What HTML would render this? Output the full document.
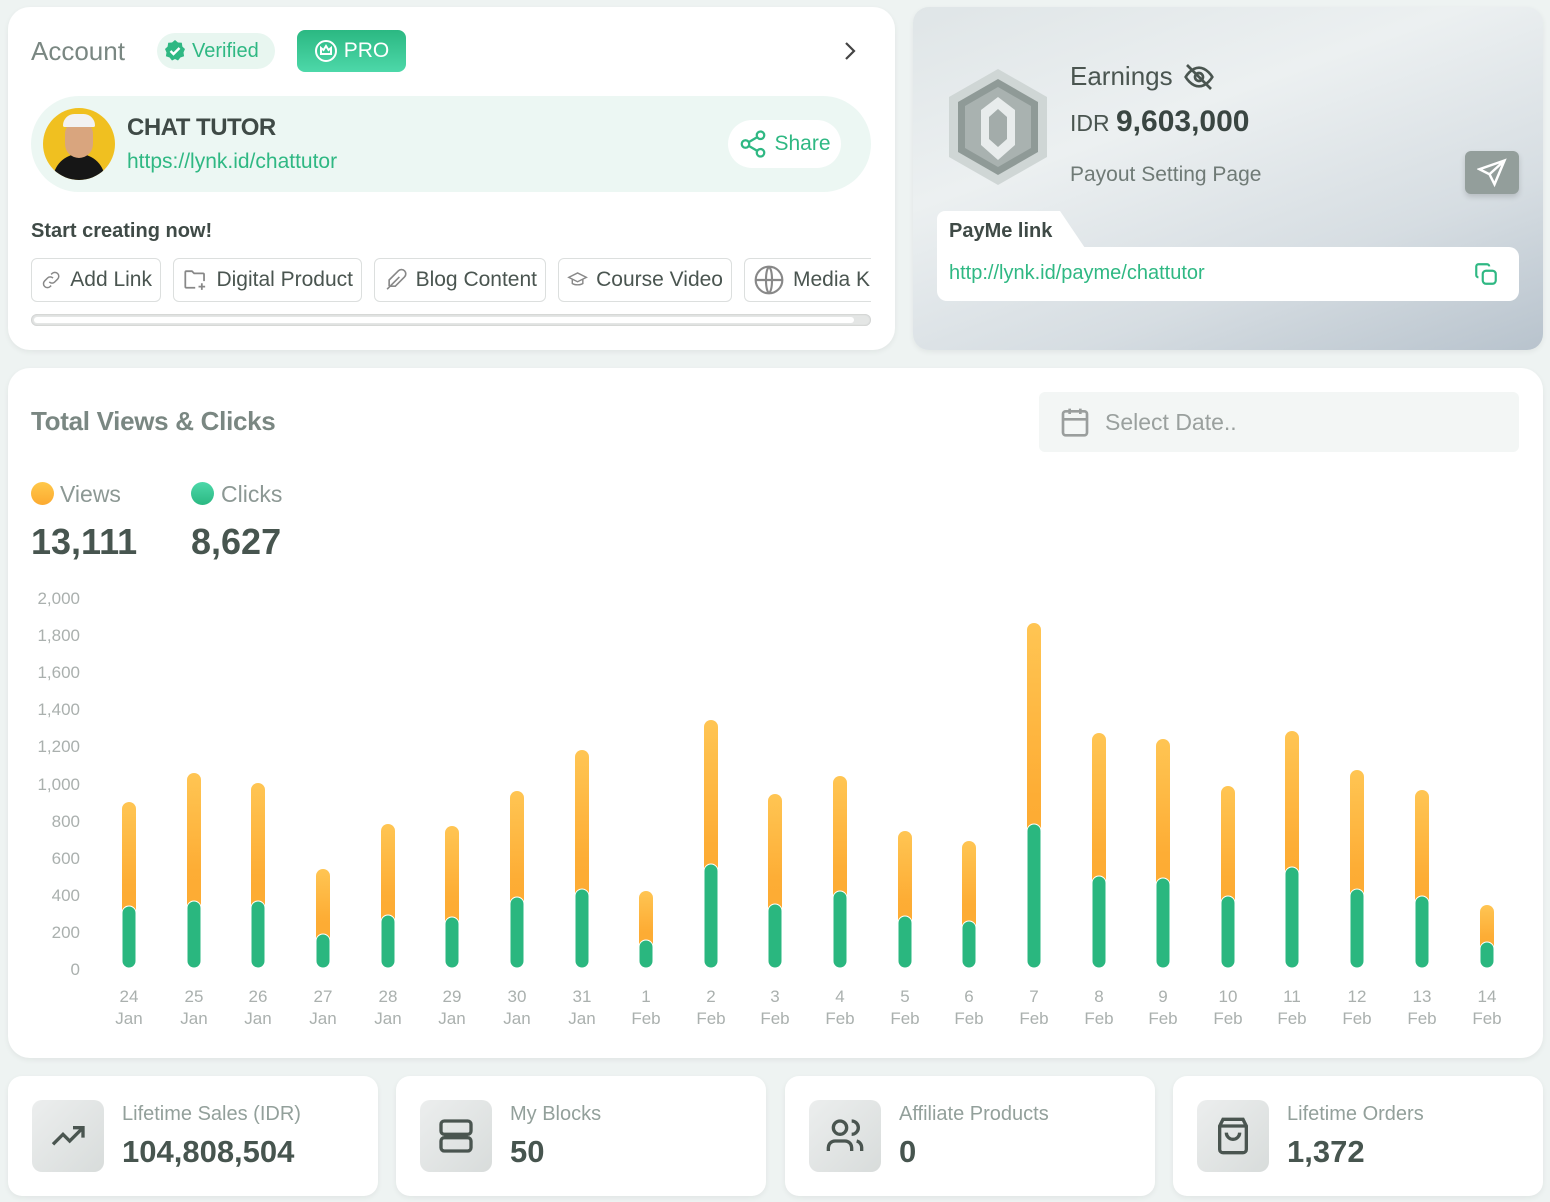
<!DOCTYPE html>
<html><head><meta charset="utf-8"><style>
*{box-sizing:border-box;margin:0;padding:0}
body{width:1550px;height:1202px;background:#eef3f2;font-family:"Liberation Sans",sans-serif;position:relative;overflow:hidden;color:#4a5a55}
.card{position:absolute;background:#fff;border-radius:22px;box-shadow:0 2px 6px rgba(0,0,0,.06)}
.abs{position:absolute}
.btn{position:absolute;top:258px;height:44px;border:1px solid #dcdfde;border-radius:6px;display:flex;align-items:center;padding:0 8px;font-size:21px;color:#4a5550;gap:8px;white-space:nowrap}
.stat{position:absolute;top:1076px;width:370px;height:120px;background:#fff;border-radius:14px;box-shadow:0 2px 6px rgba(0,0,0,.06)}
.stat .ic{position:absolute;left:24px;top:24px;width:72px;height:72px;border-radius:10px;background:linear-gradient(135deg,#eceeee,#d8dcdb);display:flex;align-items:center;justify-content:center}
.stat .l{position:absolute;left:114px;top:27px;font-size:20px;color:#93a09b}
.stat .v{position:absolute;left:114px;top:58px;font-size:31px;font-weight:bold;color:#47554f}
</style></head><body>

<div class="card" style="left:8px;top:7px;width:887px;height:343px">
  <div class="abs" style="left:23px;top:29px;font-size:26px;color:#7a8782">Account</div>
  <div class="abs" style="left:149px;top:26px;width:118px;height:36px;border-radius:18px;background:#e8f6f0;display:flex;align-items:center;padding-left:6px;gap:5px;font-size:20px;color:#2fb883">
    <svg width="24" height="24" viewBox="0 0 24 24"><path d="M12 1l3 2.5 3.8.3.6 3.8L22 10l-1.5 3.5.6 3.8-3.7 1.2L15 21.5 12 20l-3 1.5-2.4-3-3.7-1.2.6-3.8L2 10l2.6-2.4.6-3.8L9 3.5z" fill="#2fb883"/><path d="M7.5 12l3 3 6-6" stroke="#fff" stroke-width="2.4" fill="none"/></svg>Verified</div>
  <div class="abs" style="left:289px;top:23px;width:109px;height:42px;border-radius:8px;background:linear-gradient(#2bb882,#4dd8a9);display:flex;align-items:center;justify-content:center;gap:6px;color:#fff;font-size:21px">
    <svg width="24" height="24" viewBox="0 0 24 24" fill="none" stroke="#fff" stroke-width="2"><circle cx="12" cy="12" r="10"/><path d="M7 9l2.5 2L12 7l2.5 4L17 9v6H7z"/></svg>PRO</div>
  <svg class="abs" style="left:834px;top:33px" width="16" height="22" viewBox="0 0 16 22"><path d="M4 3l8 8-8 8" stroke="#444" stroke-width="2.2" fill="none"/></svg>
  <div class="abs" style="left:23px;top:89px;width:840px;height:96px;border-radius:48px;background:#ecf7f3">
    <div class="abs" style="left:12px;top:12px;width:72px;height:72px;border-radius:50%;background:#f0c020;overflow:hidden">
      <div class="abs" style="left:10px;top:46px;width:52px;height:40px;border-radius:26px 26px 0 0;background:#161616"></div>
      <div class="abs" style="left:22px;top:12px;width:28px;height:38px;border-radius:14px;background:#d9a57e"></div>
      <div class="abs" style="left:20px;top:6px;width:32px;height:13px;border-radius:14px 14px 2px 2px;background:#f2f2f2"></div>
    </div>
    <div class="abs" style="left:96px;top:18px;font-size:24px;font-weight:bold;color:#3f4a46;letter-spacing:-.5px">CHAT TUTOR</div>
    <div class="abs" style="left:96px;top:54px;font-size:21px;color:#2fb883">https://lynk.id/chattutor</div>
    <div class="abs" style="left:697px;top:24px;width:113px;height:48px;border-radius:24px;background:#fff;display:flex;align-items:center;justify-content:center;gap:6px;color:#2fb883;font-size:21px">
      <svg width="30" height="30" viewBox="0 0 24 24" fill="none" stroke="#2fb883" stroke-width="1.8"><circle cx="18" cy="5" r="3"/><circle cx="6" cy="12" r="3"/><circle cx="18" cy="19" r="3"/><path d="M8.6 13.5l6.8 4M15.4 6.5l-6.8 4"/></svg>Share</div>
  </div>
  <div class="abs" style="left:23px;top:213px;font-size:20px;font-weight:bold;color:#3f4a46">Start creating now!</div>
  <div class="btn" style="left:23px;width:130px;top:251px"><svg width="26" height="26" viewBox="0 0 24 24" fill="none" stroke="#888" stroke-width="1.6"><path d="M10 14a4 4 0 006 0l3-3a4 4 0 00-6-6l-1 1M14 10a4 4 0 00-6 0l-3 3a4 4 0 006 6l1-1"/></svg>Add Link</div>
  <div class="btn" style="left:165px;width:189px;top:251px"><svg width="28" height="28" viewBox="0 0 24 24" fill="none" stroke="#888" stroke-width="1.6"><path d="M12 19H4a1 1 0 01-1-1V5a1 1 0 011-1h5l2 2h8a1 1 0 011 1v6M18 15v6M15 18h6"/></svg>Digital Product</div>
  <div class="btn" style="left:366px;width:172px;top:251px"><svg width="28" height="28" viewBox="0 0 24 24" fill="none" stroke="#888" stroke-width="1.6"><path d="M4 21L16 9M6 18V12l9-9a4 4 0 016 6l-9 9H6"/></svg>Blog Content</div>
  <div class="btn" style="left:550px;width:174px;top:251px"><svg width="28" height="28" viewBox="0 0 24 24" fill="none" stroke="#888" stroke-width="1.6"><path d="M2 9l10-5 10 5-10 5zM6 11v5c3 2 9 2 12 0v-5"/></svg>Course Video</div>
  <div class="btn" style="left:736px;width:127px;top:251px;border-right:none;border-radius:6px 0 0 6px;overflow:hidden"><svg width="32" height="32" viewBox="0 0 24 24" fill="none" stroke="#888" stroke-width="1.6" style="flex:none"><circle cx="12" cy="12" r="10"/><path d="M2 12h20M12 2c3 3 3 17 0 20M12 2c-3 3-3 17 0 20"/></svg>Media Kit</div>
  <div class="abs" style="left:23px;top:307px;width:840px;height:12px;border-radius:6px;background:#e4e6e5;box-shadow:inset 0 0 2px rgba(0,0,0,.2)"><div style="margin:3px 3px;height:6px;width:820px;border-radius:3px;background:#fff"></div></div>
</div>

<div class="card" style="left:913px;top:7px;width:630px;height:343px;border-radius:16px;background:linear-gradient(160deg,#dfe5e7 0%,#ecf0f1 35%,#d6dde2 70%,#b8c3cd 100%);overflow:hidden">
  <svg class="abs" style="left:30px;top:58px" width="110" height="124" viewBox="0 0 110 124"><polygon points="55,4 104,32 104,92 55,120 6,92 6,32" fill="#cfd6d5"/><polygon points="55,14 95,37 95,87 55,110 15,87 15,37" fill="#8f9a97"/><polygon points="55,22 88,41 88,83 55,102 22,83 22,41" fill="#a9b2b0"/><polygon points="55,32 72,45 72,80 55,95 38,80 38,45" fill="#e8ecec"/><polygon points="55,44 64,52 64,74 55,82 46,74 46,52" fill="#a3acaa"/></svg>
  <div class="abs" style="left:157px;top:54px;font-size:26px;color:#4a5550">Earnings</div>
  <svg class="abs" style="left:270px;top:54px" width="32" height="32" viewBox="0 0 24 24" fill="none" stroke="#4a5550" stroke-width="2"><path d="M2 12s4-7 10-7 10 7 10 7-4 7-10 7S2 12 2 12z"/><circle cx="12" cy="12" r="3"/><path d="M3 3l18 18"/></svg>
  <div class="abs" style="left:157px;top:98px;font-size:23px;color:#4a5550">IDR <b style="font-size:30px;color:#3a4642">9,603,000</b></div>
  <div class="abs" style="left:157px;top:156px;font-size:21px;color:#6f7a76">Payout Setting Page</div>
  <div class="abs" style="left:552px;top:144px;width:54px;height:43px;border-radius:6px;background:#939e9b;display:flex;align-items:center;justify-content:center;box-shadow:0 3px 6px rgba(0,0,0,.15)"><svg width="30" height="30" viewBox="0 0 24 24" fill="none" stroke="#fff" stroke-width="2"><path d="M22 2L2 9l8 4 4 8zM10 13l12-11"/></svg></div>
  <div class="abs" style="left:24px;top:204px;width:150px;height:40px;background:#fff;clip-path:polygon(0 0,82% 0,100% 100%,0 100%);border-radius:8px 0 0 0"></div>
  <div class="abs" style="left:36px;top:213px;font-size:20px;font-weight:bold;color:#3f4a46">PayMe link</div>
  <div class="abs" style="left:24px;top:240px;width:582px;height:54px;background:#fff;border-radius:0 10px 10px 10px">
    <div class="abs" style="left:12px;top:15px;font-size:20px;color:#2fb883">http://lynk.id/payme/chattutor</div>
    <svg class="abs" style="left:536px;top:14px" width="26" height="26" viewBox="0 0 24 24" fill="none" stroke="#2fb883" stroke-width="2"><rect x="9" y="9" width="12" height="12" rx="3"/><path d="M5 15a2 2 0 01-2-2V5a2 2 0 012-2h8a2 2 0 012 2"/></svg>
  </div>
</div>

<div class="card" style="left:8px;top:368px;width:1535px;height:690px">
  <div class="abs" style="left:23px;top:38px;font-size:26px;font-weight:bold;color:#7a8782;letter-spacing:-.3px">Total Views &amp; Clicks</div>
  <div class="abs" style="left:1031px;top:24px;width:480px;height:60px;border-radius:6px;background:#f3f6f5;display:flex;align-items:center;padding-left:20px;gap:14px;font-size:23px;color:#9aa09e">
    <svg width="32" height="34" viewBox="0 0 24 24" fill="none" stroke="#9a9e9d" stroke-width="2"><rect x="3" y="4" width="18" height="18" rx="2"/><path d="M3 10h18M8 2v4M16 2v4"/></svg>Select Date..</div>
  <div class="abs" style="left:23px;top:114px;width:23px;height:23px;border-radius:50%;background:linear-gradient(#ffc84a,#fcaa30)"></div>
  <div class="abs" style="left:52px;top:113px;font-size:23px;color:#8c9894">Views</div>
  <div class="abs" style="left:183px;top:114px;width:23px;height:23px;border-radius:50%;background:linear-gradient(#4dd8a9,#2bb882)"></div>
  <div class="abs" style="left:213px;top:113px;font-size:23px;color:#8c9894">Clicks</div>
  <div class="abs" style="left:23px;top:153px;font-size:36px;font-weight:bold;color:#47554f">13,111</div>
  <div class="abs" style="left:183px;top:153px;font-size:36px;font-weight:bold;color:#47554f">8,627</div>
</div>

<svg class="abs" style="left:0;top:0" width="1550" height="1060">
<defs><linearGradient id="or" x1="0" y1="0" x2="0" y2="1"><stop offset="0" stop-color="#ffc553"/><stop offset=".5" stop-color="#fdad35"/><stop offset="1" stop-color="#fca830"/></linearGradient></defs>
<g font-family="Liberation Sans,sans-serif" font-size="17" fill="#aab0ae" text-anchor="end">
<text x="80" y="604">2,000</text><text x="80" y="641">1,800</text><text x="80" y="678">1,600</text><text x="80" y="715">1,400</text><text x="80" y="752">1,200</text><text x="80" y="790">1,000</text><text x="80" y="827">800</text><text x="80" y="864">600</text><text x="80" y="901">400</text><text x="80" y="938">200</text><text x="80" y="975">0</text>
</g>
<g>
<rect x="122" y="802" width="14" height="166" rx="7" fill="url(#or)"/><rect x="122" y="906" width="14" height="62" rx="7" fill="#2ab77f" stroke="#fff"/>
<rect x="187" y="773" width="14" height="195" rx="7" fill="url(#or)"/><rect x="187" y="901" width="14" height="67" rx="7" fill="#2ab77f" stroke="#fff"/>
<rect x="251" y="783" width="14" height="185" rx="7" fill="url(#or)"/><rect x="251" y="901" width="14" height="67" rx="7" fill="#2ab77f" stroke="#fff"/>
<rect x="316" y="869" width="14" height="99" rx="7" fill="url(#or)"/><rect x="316" y="934" width="14" height="34" rx="7" fill="#2ab77f" stroke="#fff"/>
<rect x="381" y="824" width="14" height="144" rx="7" fill="url(#or)"/><rect x="381" y="915" width="14" height="53" rx="7" fill="#2ab77f" stroke="#fff"/>
<rect x="445" y="826" width="14" height="142" rx="7" fill="url(#or)"/><rect x="445" y="917" width="14" height="51" rx="7" fill="#2ab77f" stroke="#fff"/>
<rect x="510" y="791" width="14" height="177" rx="7" fill="url(#or)"/><rect x="510" y="897" width="14" height="71" rx="7" fill="#2ab77f" stroke="#fff"/>
<rect x="575" y="750" width="14" height="218" rx="7" fill="url(#or)"/><rect x="575" y="889" width="14" height="79" rx="7" fill="#2ab77f" stroke="#fff"/>
<rect x="639" y="891" width="14" height="77" rx="7" fill="url(#or)"/><rect x="639" y="940" width="14" height="28" rx="7" fill="#2ab77f" stroke="#fff"/>
<rect x="704" y="720" width="14" height="248" rx="7" fill="url(#or)"/><rect x="704" y="864" width="14" height="104" rx="7" fill="#2ab77f" stroke="#fff"/>
<rect x="768" y="794" width="14" height="174" rx="7" fill="url(#or)"/><rect x="768" y="904" width="14" height="64" rx="7" fill="#2ab77f" stroke="#fff"/>
<rect x="833" y="776" width="14" height="192" rx="7" fill="url(#or)"/><rect x="833" y="891" width="14" height="77" rx="7" fill="#2ab77f" stroke="#fff"/>
<rect x="898" y="831" width="14" height="137" rx="7" fill="url(#or)"/><rect x="898" y="916" width="14" height="52" rx="7" fill="#2ab77f" stroke="#fff"/>
<rect x="962" y="841" width="14" height="127" rx="7" fill="url(#or)"/><rect x="962" y="921" width="14" height="47" rx="7" fill="#2ab77f" stroke="#fff"/>
<rect x="1027" y="623" width="14" height="345" rx="7" fill="url(#or)"/><rect x="1027" y="824" width="14" height="144" rx="7" fill="#2ab77f" stroke="#fff"/>
<rect x="1092" y="733" width="14" height="235" rx="7" fill="url(#or)"/><rect x="1092" y="876" width="14" height="92" rx="7" fill="#2ab77f" stroke="#fff"/>
<rect x="1156" y="739" width="14" height="229" rx="7" fill="url(#or)"/><rect x="1156" y="878" width="14" height="90" rx="7" fill="#2ab77f" stroke="#fff"/>
<rect x="1221" y="786" width="14" height="182" rx="7" fill="url(#or)"/><rect x="1221" y="896" width="14" height="72" rx="7" fill="#2ab77f" stroke="#fff"/>
<rect x="1285" y="731" width="14" height="237" rx="7" fill="url(#or)"/><rect x="1285" y="867" width="14" height="101" rx="7" fill="#2ab77f" stroke="#fff"/>
<rect x="1350" y="770" width="14" height="198" rx="7" fill="url(#or)"/><rect x="1350" y="889" width="14" height="79" rx="7" fill="#2ab77f" stroke="#fff"/>
<rect x="1415" y="790" width="14" height="178" rx="7" fill="url(#or)"/><rect x="1415" y="896" width="14" height="72" rx="7" fill="#2ab77f" stroke="#fff"/>
<rect x="1480" y="905" width="14" height="63" rx="7" fill="url(#or)"/><rect x="1480" y="942" width="14" height="26" rx="7" fill="#2ab77f" stroke="#fff"/>
</g>
<g font-family="Liberation Sans,sans-serif" font-size="17" fill="#aab0ae" text-anchor="middle">
<text x="129" y="1002">24</text><text x="129" y="1024">Jan</text>
<text x="194" y="1002">25</text><text x="194" y="1024">Jan</text>
<text x="258" y="1002">26</text><text x="258" y="1024">Jan</text>
<text x="323" y="1002">27</text><text x="323" y="1024">Jan</text>
<text x="388" y="1002">28</text><text x="388" y="1024">Jan</text>
<text x="452" y="1002">29</text><text x="452" y="1024">Jan</text>
<text x="517" y="1002">30</text><text x="517" y="1024">Jan</text>
<text x="582" y="1002">31</text><text x="582" y="1024">Jan</text>
<text x="646" y="1002">1</text><text x="646" y="1024">Feb</text>
<text x="711" y="1002">2</text><text x="711" y="1024">Feb</text>
<text x="775" y="1002">3</text><text x="775" y="1024">Feb</text>
<text x="840" y="1002">4</text><text x="840" y="1024">Feb</text>
<text x="905" y="1002">5</text><text x="905" y="1024">Feb</text>
<text x="969" y="1002">6</text><text x="969" y="1024">Feb</text>
<text x="1034" y="1002">7</text><text x="1034" y="1024">Feb</text>
<text x="1099" y="1002">8</text><text x="1099" y="1024">Feb</text>
<text x="1163" y="1002">9</text><text x="1163" y="1024">Feb</text>
<text x="1228" y="1002">10</text><text x="1228" y="1024">Feb</text>
<text x="1292" y="1002">11</text><text x="1292" y="1024">Feb</text>
<text x="1357" y="1002">12</text><text x="1357" y="1024">Feb</text>
<text x="1422" y="1002">13</text><text x="1422" y="1024">Feb</text>
<text x="1487" y="1002">14</text><text x="1487" y="1024">Feb</text>
</g>
</svg>

<div class="stat" style="left:8px"><div class="ic"><svg width="40" height="40" viewBox="0 0 24 24" fill="none" stroke="#4a5550" stroke-width="2"><path d="M3 17l6-6 4 4 8-8M15 7h6v6"/></svg></div><div class="l">Lifetime Sales (IDR)</div><div class="v">104,808,504</div></div>
<div class="stat" style="left:396px"><div class="ic"><svg width="40" height="40" viewBox="0 0 24 24" fill="none" stroke="#4a5550" stroke-width="2"><rect x="3" y="3" width="18" height="8" rx="2"/><rect x="3" y="13" width="18" height="8" rx="2"/><path d="M7 7h.01M7 17h.01"/></svg></div><div class="l">My Blocks</div><div class="v">50</div></div>
<div class="stat" style="left:785px"><div class="ic"><svg width="40" height="40" viewBox="0 0 24 24" fill="none" stroke="#4a5550" stroke-width="2"><circle cx="9" cy="7" r="4"/><path d="M2 21v-2a4 4 0 014-4h6a4 4 0 014 4v2M16 3a4 4 0 010 8M22 21v-2a4 4 0 00-3-4"/></svg></div><div class="l">Affiliate Products</div><div class="v">0</div></div>
<div class="stat" style="left:1173px"><div class="ic"><svg width="40" height="40" viewBox="0 0 24 24" fill="none" stroke="#4a5550" stroke-width="2"><path d="M6 2L4 6v14a2 2 0 002 2h12a2 2 0 002-2V6l-2-4zM4 6h16M16 10a4 4 0 01-8 0"/></svg></div><div class="l">Lifetime Orders</div><div class="v">1,372</div></div>

</body></html>
